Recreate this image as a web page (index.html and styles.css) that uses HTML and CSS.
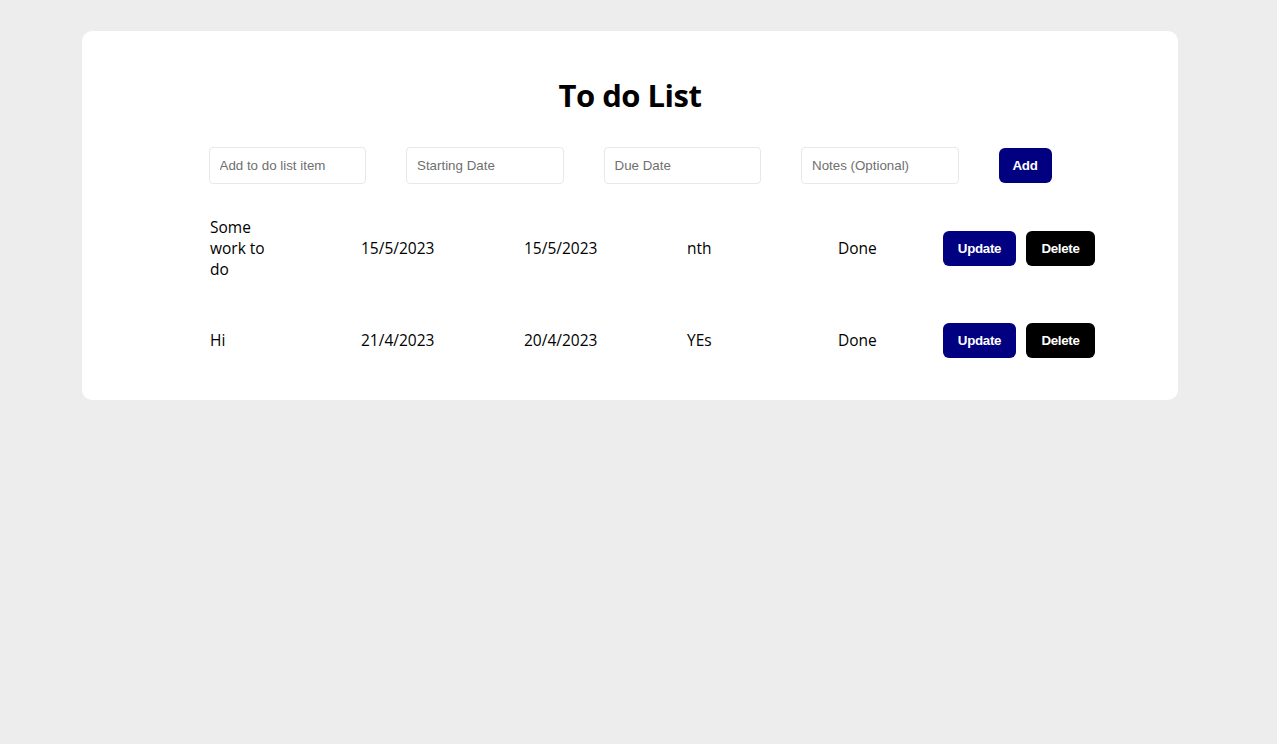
FILE: index.html
```html
<!DOCTYPE html>
<html lang="en">
<head>
<meta charset="utf-8">
<title>To do List</title>
<link rel="stylesheet" href="styles.css">
</head>
<body>
<main class="card">
  <h1 class="title">To do List</h1>
  <form class="add-form">
    <input class="field" type="text" placeholder="Add to do list item">
    <input class="field" type="text" placeholder="Starting Date">
    <input class="field" type="text" placeholder="Due Date">
    <input class="field" type="text" placeholder="Notes (Optional)">
    <button class="btn btn-add" type="button">Add</button>
  </form>
  <div class="list">
    <div class="row">
      <div class="cell cell-name">Some work to do</div>
      <div class="cell">15/5/2023</div>
      <div class="cell">15/5/2023</div>
      <div class="cell">nth</div>
      <div class="cell">Done</div>
      <div class="cell cell-actions">
        <button class="btn btn-update" type="button">Update</button>
        <button class="btn btn-delete" type="button">Delete</button>
      </div>
    </div>
    <div class="row">
      <div class="cell cell-name">Hi</div>
      <div class="cell">21/4/2023</div>
      <div class="cell">20/4/2023</div>
      <div class="cell">YEs</div>
      <div class="cell">Done</div>
      <div class="cell cell-actions">
        <button class="btn btn-update" type="button">Update</button>
        <button class="btn btn-delete" type="button">Delete</button>
      </div>
    </div>
  </div>
</main>
</body>
</html>
```

FILE: styles.css
```css
html, body {
  margin: 0;
  padding: 0;
  background: #ededed;
}

body {
  font-family: "Open Sans", "Noto Sans", sans-serif;
  color: #000;
  padding-top: 31px;
}

.card {
  margin-left: 82px;
  width: 1096px;
  box-sizing: border-box;
  background: #fff;
  border-radius: 10px;
  padding: 44px 0 21px;
}

.title {
  margin: 0;
  text-align: center;
  font-size: 31px;
  line-height: 40px;
  font-weight: 700;
  letter-spacing: -0.5px;
}

.add-form {
  display: flex;
  justify-content: center;
  align-items: center;
  gap: 40px;
  margin-top: 32px;
}

.field {
  width: 157.5px;
  height: 37px;
  box-sizing: border-box;
  border: 1px solid #e8e8e8;
  border-radius: 4px;
  padding: 0 10px;
  font-family: "Liberation Sans", Arial, sans-serif;
  font-size: 13.33px;
  color: #333;
  outline: none;
}

.field::placeholder {
  color: #6f6f6f;
}

.btn {
  border: none;
  border-radius: 6px;
  color: #fff;
  height: 35px;
  font-family: "Liberation Sans", Arial, sans-serif;
  font-size: 13.33px;
  font-weight: 700;
  letter-spacing: -0.3px;
  padding: 0;
  cursor: pointer;
}

.btn-add {
  width: 53px;
  background: #000080;
}

.list {
  margin-top: 11px;
  padding-left: 128px;
}

.row {
  display: grid;
  grid-template-columns: 151px 163px 163px 151px 105px auto;
  align-items: center;
  padding: 21.5px 0;
  font-size: 15.5px;
  line-height: 21px;
}

.cell-name {
  width: 66px;
}

.cell-actions {
  display: flex;
  gap: 10px;
}

.btn-update {
  width: 73px;
  background: #000080;
}

.btn-delete {
  width: 69px;
  background: #000;
}
```
